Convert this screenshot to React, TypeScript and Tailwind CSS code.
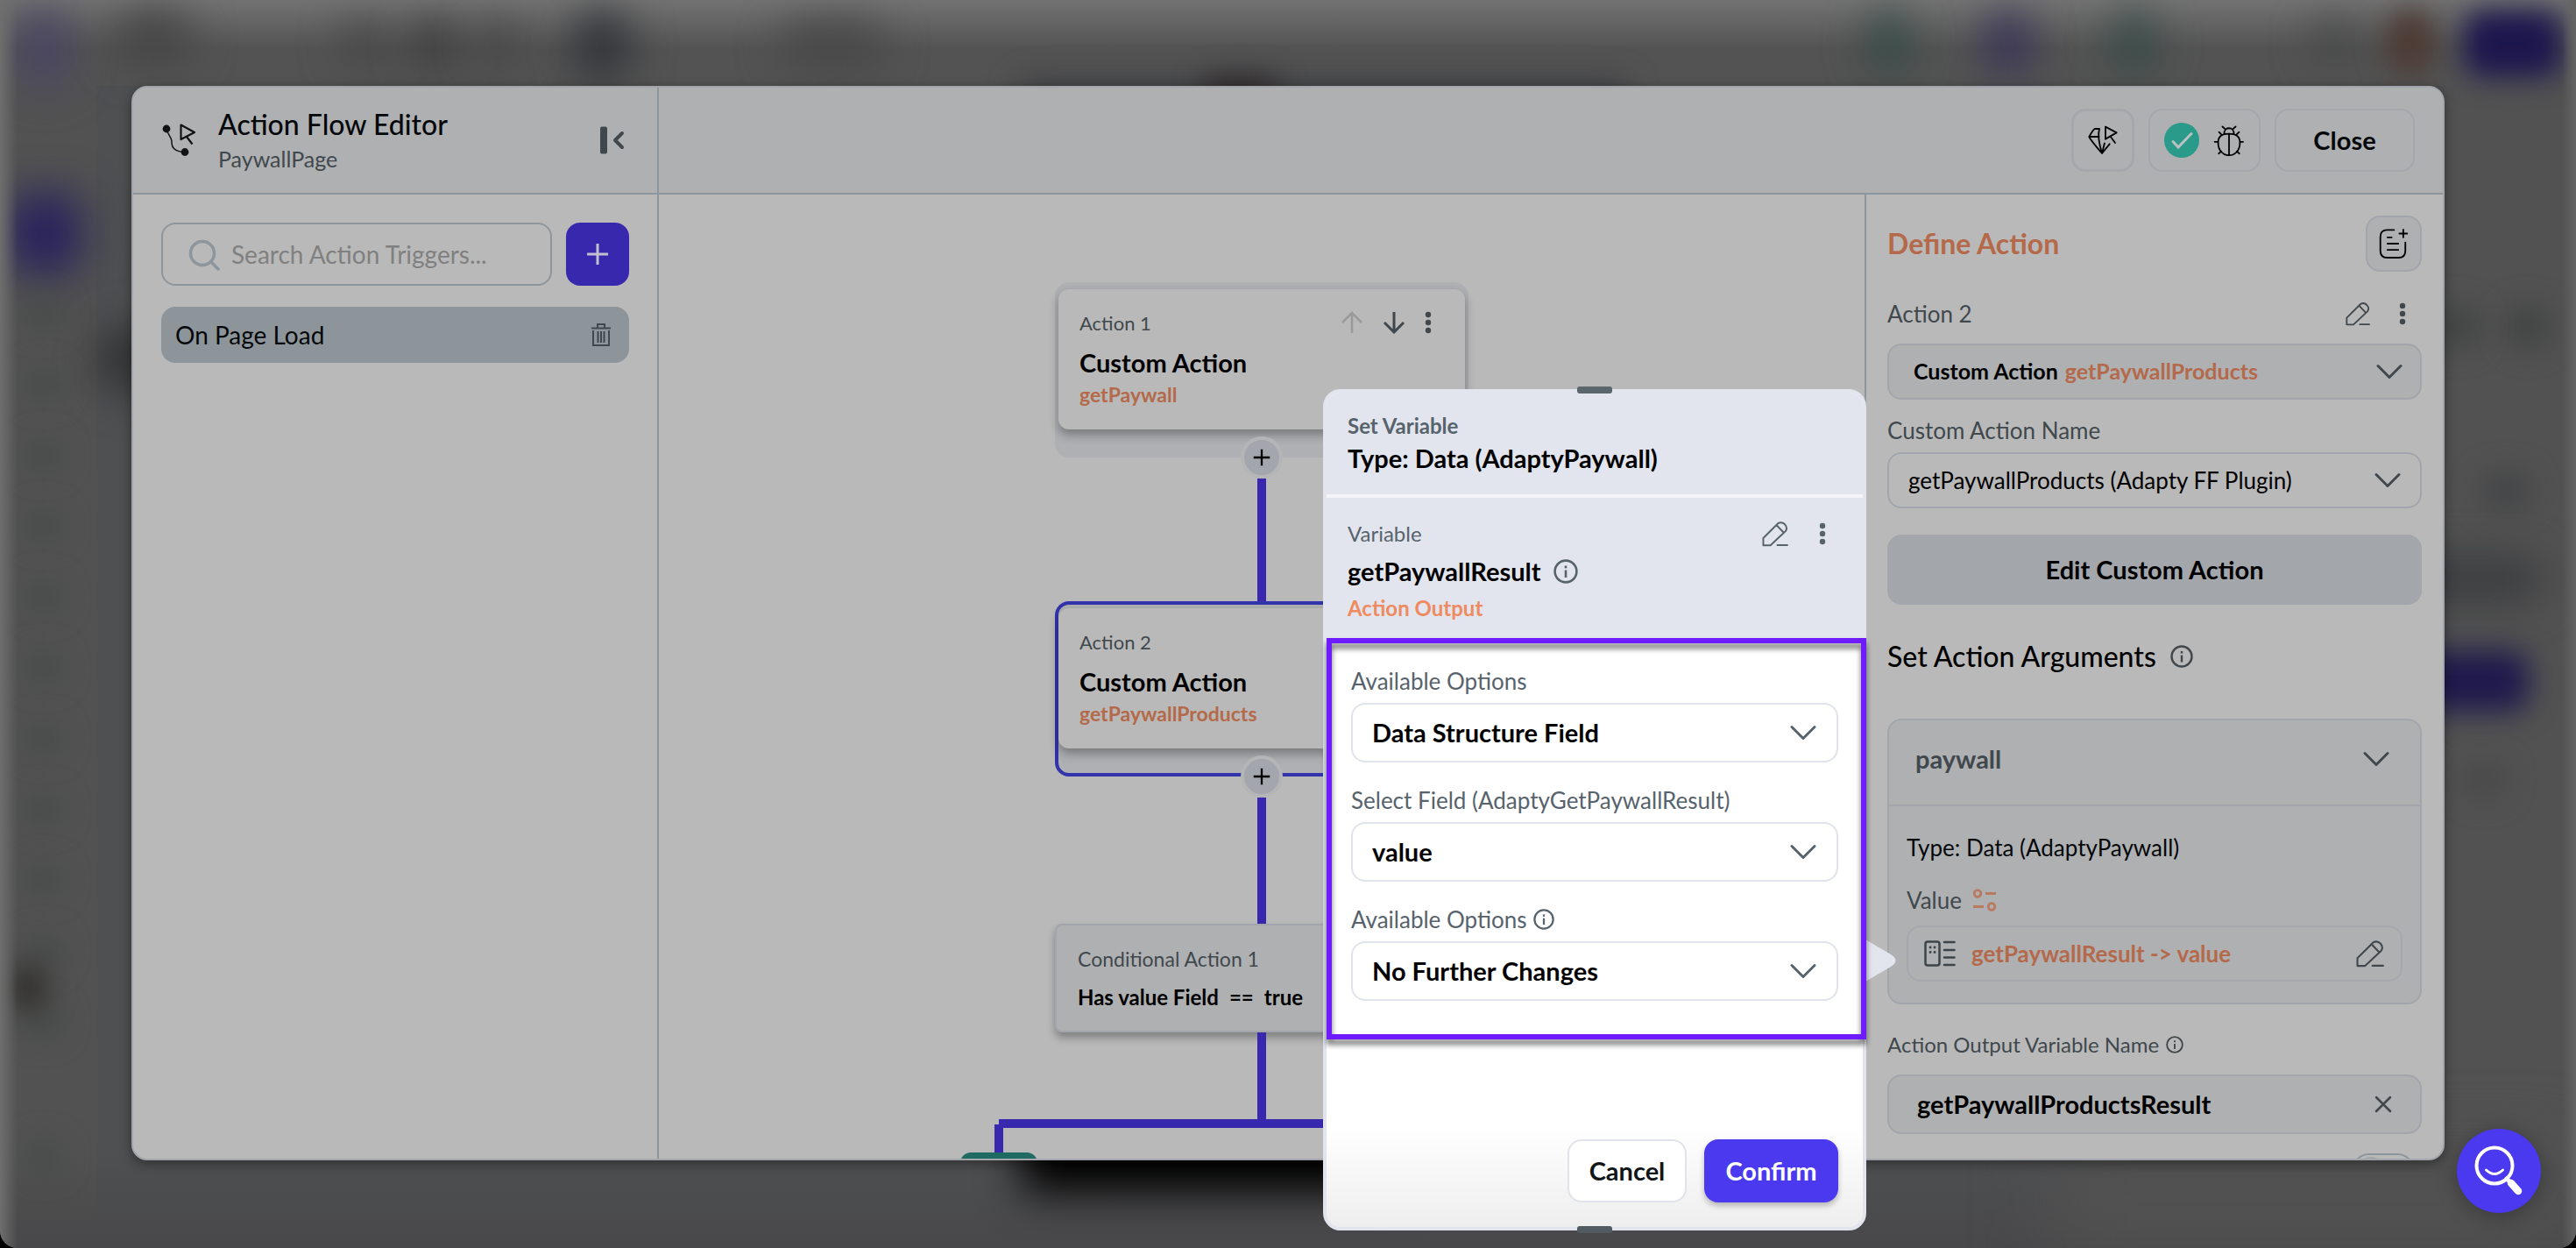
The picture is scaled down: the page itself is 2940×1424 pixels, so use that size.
import type { ReactNode } from "react";

type IconProps = { className?: string };

function Chevron({ className = "" }: IconProps) {
  return (
    <svg viewBox="0 0 30 18" className={`pointer-events-none h-[18px] w-[30px] shrink-0 ${className}`} fill="none" stroke="currentColor" strokeWidth="3" strokeLinecap="round" strokeLinejoin="round" aria-hidden="true">
      <path d="M2 2.5 15 15.5 28 2.5" />
    </svg>
  );
}

function Pencil({ className = "" }: IconProps) {
  return (
    <svg viewBox="1008 698 88 84" className={`shrink-0 ${className}`} fill="none" stroke="currentColor" strokeWidth="5.5" strokeLinecap="round" strokeLinejoin="round" aria-hidden="true">
      <path d="M1014 777v-23l47-47q12-7 22 3 10 11 2 22l-48 45zM1056 712l22 23M1059 776.500h32" />
    </svg>
  );
}

function Dots({ className = "" }: IconProps) {
  return (
    <svg viewBox="0 0 8 26" className={`h-[26px] w-2 shrink-0 ${className}`} fill="currentColor" aria-hidden="true">
      <circle cx="4" cy="4" r="3.200" />
      <circle cx="4" cy="13" r="3.200" />
      <circle cx="4" cy="22" r="3.200" />
    </svg>
  );
}

function Info({ className = "" }: IconProps) {
  return (
    <svg viewBox="0 0 28 28" className={`shrink-0 ${className}`} fill="none" stroke="currentColor" strokeWidth="2.600" aria-hidden="true">
      <circle cx="14" cy="14" r="12.400" />
      <path d="M14 12.500v8.500" />
      <path d="M14 7.500v2.800" />
    </svg>
  );
}

function FlowIcon() {
  return (
    <svg viewBox="183 141 42 42" className="h-[42px] w-[42px] shrink-0" fill="none" stroke="#101314" strokeWidth="2.200" aria-hidden="true">
      <path strokeWidth="1.500" d="M190 149c2 8 5 8 6 14-.5 8 4 12 14 12.500" />
      <circle cx="190" cy="149" r="4.400" fill="#101314" stroke="none" />
      <circle cx="211" cy="175.500" r="4.400" fill="#101314" stroke="none" />
      <path strokeLinejoin="round" d="M206.500 144.500 222 153l-15.500 8zM213 158l6.500 8.500" />
    </svg>
  );
}

function GemCursor() {
  return (
    <svg viewBox="126 100 108 108" className="h-9 w-9" fill="none" stroke="#000" strokeWidth="5.500" strokeLinejoin="round" strokeLinecap="round" aria-hidden="true">
      <path d="M168 115h-16q-6 4-19 27 2 8 44 57l26-32M133 142h34M168 115q-8 28 9 84l9-35M189 108l38 20-38 22zM206 141l16 22" />
    </svg>
  );
}

function Bug() {
  return (
    <svg viewBox="560 98 110 112" className="h-[37px] w-9" fill="none" stroke="#000" strokeWidth="5.500" strokeLinecap="round" aria-hidden="true">
      <path d="M615 130c26 0 38 10 38 30 0 28-16 45-38 45s-38-17-38-45c0-20 12-30 38-30zM598 130c0-26 34-26 34 0M615 130v75" />
      <path d="m592 105 10 9M638 105l-10 9M580 124l9 9M650 124l-9 9M565 158h11M654 158h10M579 199l9-8M651 199l-9-8" />
    </svg>
  );
}

function NoteAdd() {
  return (
    <svg viewBox="1124 455 104 106" className="h-9 w-9" fill="none" stroke="#000" strokeWidth="5.500" strokeLinecap="round" aria-hidden="true">
      <path d="M1177 462h-23q-23 0-23 23v47q0 23 23 23h38q23 0 23-23v-28M1155 487h14M1155 508h36M1155 529h36M1208 461v26M1195 474h26" />
    </svg>
  );
}

function Trash() {
  return (
    <svg viewBox="0 0 24 28" className="h-7 w-6" fill="none" stroke="#40484d" strokeWidth="2" aria-hidden="true">
      <path d="M1 6.500h22M8 6V2h8v4M3 9v17h18V9M8.500 10v13M12 10v13M15.500 10v13" />
    </svg>
  );
}

function FieldIcon() {
  return (
    <svg viewBox="0 0 36 30" className="h-[30px] w-9 shrink-0" fill="none" stroke="#3b4449" strokeWidth="2.500" strokeLinecap="round" aria-hidden="true">
      <rect x="1.500" y="1.500" width="16" height="27" rx="2.500" />
      <path d="M23 2h11.500M23 11h11.500M23 19.500h11.500M23 28h11.500" />
      <path strokeWidth="2.800" d="M7 8h.1M12 8h.1M7 13.500h.1M12 13.500h.1" />
    </svg>
  );
}

function Plus({ className = "" }: IconProps) {
  return (
    <svg viewBox="0 0 26 26" className={className} stroke="currentColor" strokeWidth="3" aria-hidden="true">
      <path d="M13 1v24M1 13h24" />
    </svg>
  );
}

function Backdrop() {
  return (
    <div aria-hidden="true" className="absolute inset-0 overflow-hidden rounded-b-[20px] bg-[#525252]">
      <div className="absolute inset-y-0 left-[110px] right-0 bg-[#4f5052]" />
      <div className="absolute inset-y-0 right-0 w-[150px] bg-[#525252]" />
      <div className="absolute inset-x-0 bottom-0 h-[110px] bg-linear-to-b from-transparent to-[#48484a]" />
      <div className="absolute bottom-0 right-0 h-[110px] w-[600px] bg-[#525252] blur-2xl" />
      <div className="absolute inset-x-0 top-0 h-[98px] bg-[#535353]" />
      <div className="absolute inset-x-0 top-0 h-[56px] bg-linear-to-b from-[#727272] to-transparent" />
      <div className="absolute left-[20px] top-[10px] h-[90px] w-[60px] rounded-full bg-[#4a4463] blur-xl" />
      <div className="absolute left-[130px] top-[14px] h-[60px] w-[90px] rounded-full bg-[#454545] blur-xl" />
      <div className="absolute left-[390px] top-[25px] h-[50px] w-[50px] rounded-full bg-[#454545] blur-xl" />
      <div className="absolute left-[470px] top-[22px] h-[54px] w-[50px] rounded-full bg-[#3a3a3a] blur-xl" />
      <div className="absolute left-[545px] top-[25px] h-[50px] w-[50px] rounded-full bg-[#454545] blur-xl" />
      <div className="absolute left-[655px] top-[12px] h-[80px] w-[64px] rounded-full bg-[#313338] blur-xl" />
      <div className="absolute left-[890px] top-[26px] h-[54px] w-[120px] rounded-full bg-[#484848] blur-xl" />
      <div className="absolute left-[1160px] top-[90px] h-[30px] w-[700px] rounded-full bg-[#3f4044] blur-lg" />
      <div className="absolute left-[1370px] top-[88px] h-[30px] w-[90px] rounded-full bg-[#2f2a2b] blur-lg" />
      <div className="absolute right-[760px] top-[14px] h-[70px] w-[48px] rounded-full bg-[#334b46] blur-xl" />
      <div className="absolute right-[622px] top-[14px] h-[70px] w-[52px] rounded-full bg-[#363058] blur-xl" />
      <div className="absolute right-[480px] top-[14px] h-[70px] w-[48px] rounded-full bg-[#344b46] blur-xl" />
      <div className="absolute right-[250px] top-[22px] h-[50px] w-[50px] rounded-full bg-[#454646] blur-xl" />
      <div className="absolute right-[160px] top-[10px] h-[76px] w-[58px] rounded-full bg-[#4d3b34] blur-lg" />
      <div className="absolute right-[16px] top-[12px] h-[76px] w-[112px] rounded-[20px] bg-[#1c164e] blur-lg" />
      <div className="absolute left-[8px] top-[218px] h-[96px] w-[86px] rounded-[30px] bg-[#29235c] blur-xl" />
      <div className="absolute left-[115px] top-[370px] h-[80px] w-[60px] rounded-full bg-[#2e2f31] blur-xl" />
      <div className="absolute bottom-[240px] left-[30px] top-[340px] flex w-10 flex-col justify-between">
        {Array.from({ length: 11 }, (_, i) => (
          <div key={i} className="h-9 w-10 rounded-full bg-[#474a49] blur-lg" />
        ))}
      </div>
      <div className="absolute left-[12px] top-[1100px] h-[54px] w-[40px] rounded-full bg-[#2f2e2b] blur-lg" />
      <div className="absolute bottom-[86px] left-[30px] h-9 w-10 rounded-full bg-[#474a49] blur-lg" />
      <div className="absolute right-[30px] top-[348px] h-[50px] w-[50px] rounded-full bg-[#424343] blur-lg" />
      <div className="absolute right-[110px] top-[348px] h-[50px] w-[50px] rounded-full bg-[#424343] blur-lg" />
      <div className="absolute right-[50px] top-[540px] h-[40px] w-[60px] rounded-full bg-[#444547] blur-lg" />
      <div className="absolute right-[40px] top-[636px] h-[50px] w-[180px] rounded-[20px] bg-[#3b3c3f] blur-xl" />
      <div className="absolute right-[54px] top-[742px] h-[70px] w-[140px] rounded-[20px] bg-[#1f1a4c] blur-lg" />
      <div className="absolute right-[80px] top-[870px] h-[40px] w-[50px] rounded-full bg-[#484948] blur-lg" />
      <div className="absolute bottom-[64px] left-[1166px] h-[100px] w-[440px] bg-black blur-xl" />
      <div className="absolute inset-y-0 left-0 w-5 bg-linear-to-r from-[#6e6e6e] to-transparent" />
      <div className="absolute inset-y-0 right-0 w-4 bg-linear-to-l from-[#646464] to-transparent" />
    </div>
  );
}

function TriggerPanel() {
  return (
    <aside className="w-[600px] shrink-0 border-r-2 border-[#8d969c] px-8 pt-8">
      <div className="flex gap-4">
        <label className="flex h-[72px] min-w-0 flex-1 items-center gap-3 rounded-2xl border-2 border-[#8d969c] pl-7">
          <svg viewBox="0 0 38 38" className="h-[38px] w-[38px] shrink-0" fill="none" stroke="#8d969c" strokeWidth="3.500" strokeLinecap="round" aria-hidden="true">
            <circle cx="17" cy="18" r="13.500" />
            <path d="m27 28 8 8" />
          </svg>
          <input type="search" aria-label="Search action triggers" placeholder="Search Action Triggers..." className="min-w-0 flex-1 bg-transparent text-[28px] text-black outline-none placeholder:text-[#808080]" />
        </label>
        <button type="button" aria-label="Add trigger" className="flex h-[72px] w-[72px] items-center justify-center rounded-2xl bg-[#3828ad] text-[#c2bfd0]">
          <Plus className="h-[26px] w-[26px]" />
        </button>
      </div>
      <div className="mt-6 flex h-16 items-center justify-between rounded-2xl bg-[#8d959b] pl-4 pr-5">
        <button type="button" className="text-[28px] text-[#05080a]">On Page Load</button>
        <button type="button" aria-label="Delete trigger"><Trash /></button>
      </div>
    </aside>
  );
}

function ActionNode({ step, target, selected }: { step: string; target: string; selected?: boolean }) {
  return (
    <div className={`h-[200px] w-[472px] shrink-0 rounded-2xl border-4 bg-[#aeb0b3] ${selected ? "border-[#3333ac]" : "border-[#aeb0b3]"}`}>
      <div className="mt-1 flex h-[160px] flex-col rounded-xl bg-[#b9b9b9] px-6 pt-5 shadow-[0_6px_12px_rgba(0,0,0,0.32)]">
        <div className="flex h-9 items-center justify-between">
          <span className="text-[22px] text-[#40484d]">{step}</span>
          <span className="flex items-center gap-[22px] pr-[14px]">
            <button type="button" aria-label="Move up" className="text-[#9a9a9a]">
              <svg viewBox="0 0 26 26" className="h-[26px] w-[26px]" fill="none" stroke="currentColor" strokeWidth="2.500" aria-hidden="true"><path d="M13 25V2M2 13 13 2l11 11" /></svg>
            </button>
            <button type="button" aria-label="Move down" className="text-[#40484d]">
              <svg viewBox="0 0 26 26" className="h-[26px] w-[26px]" fill="none" stroke="currentColor" strokeWidth="3" aria-hidden="true"><path d="M13 1v22M2 13l11 11 11-11" /></svg>
            </button>
            <button type="button" aria-label="Node menu" className="text-[#40484d]"><Dots /></button>
          </span>
        </div>
        <span className="mt-2 text-[29px] font-bold leading-10 text-black">Custom Action</span>
        <span className="text-[23px] font-bold leading-8 text-[#b46a4a]">{target}</span>
      </div>
    </div>
  );
}

function AddNode() {
  return (
    <button type="button" aria-label="Add action" className="relative -mt-6 flex h-12 w-12 shrink-0 items-center justify-center rounded-full border-4 border-[#b4b5b7] bg-[#a3a6ac] text-black">
      <Plus className="h-5 w-5" />
    </button>
  );
}

function FlowCanvas() {
  return (
    <section aria-label="Action flow" className="flex min-w-0 flex-1 flex-col items-center overflow-hidden pt-[100px]">
      <ActionNode step="Action 1" target="getPaywall" />
      <AddNode />
      <div className="h-[140px] w-[10px] shrink-0 bg-[#3828ad]" />
      <ActionNode step="Action 2" target="getPaywallProducts" selected />
      <AddNode />
      <div className="h-36 w-[10px] shrink-0 bg-[#3828ad]" />
      <div className="flex h-[124px] w-[472px] shrink-0 flex-col rounded-lg border-2 border-[#a2a5ab] bg-[#afb0b2] px-6 pt-5 shadow-[0_6px_10px_rgba(0,0,0,0.3)]">
        <span className="text-[23px] leading-9 text-[#40484d]">Conditional Action 1</span>
        <span className="flex gap-3 text-[24px] font-bold leading-[52px] text-black">
          <span>Has value Field</span>
          <span>==</span>
          <span>true</span>
        </span>
      </div>
      <div className="h-[99px] w-[10px] shrink-0 bg-[#3828ad]" />
      <div className="w-[610px] shrink-0">
        <div className="mx-[5px] h-[10px] bg-[#3828ad]" />
        <div className="flex justify-between">
          <div className="-mt-1 h-9 w-[10px] bg-[#3828ad]" />
          <div className="-mt-1 h-9 w-[10px] bg-[#3828ad]" />
        </div>
        <div className="-mx-[39px] -mt-1 flex justify-between">
          <div className="h-10 w-[88px] shrink-0 rounded-xl bg-[#1f6b62]" />
          <div className="h-10 w-[88px] shrink-0 rounded-xl bg-[#1f6b62]" />
        </div>
      </div>
    </section>
  );
}

function ActionPanel() {
  return (
    <aside className="w-[660px] shrink-0 overflow-hidden border-l-2 border-[#8d969c] px-6 pt-6 text-[#40484d]">
      <div className="flex h-16 items-center justify-between">
        <h2 className="text-[32px] font-bold text-[#b46a4a]">Define Action</h2>
        <button type="button" aria-label="Add note" className="flex h-16 w-16 items-center justify-center rounded-2xl border-2 border-[#a2a5ab] bg-[#afb0b2]"><NoteAdd /></button>
      </div>
      <div className="mt-8 flex h-8 items-center pr-[18px]">
        <span className="flex-1 text-[26px]">Action 2</span>
        <button type="button" aria-label="Rename action"><Pencil className="h-7 w-[30px]" /></button>
        <button type="button" aria-label="Action menu" className="ml-8"><Dots /></button>
      </div>
      <button type="button" className="mt-[18px] flex h-16 w-full items-center gap-2 rounded-2xl border-2 border-[#a2a5ab] bg-[#afb0b2] pl-7 pr-5 text-[25px] font-bold">
        <span className="text-black">Custom Action</span>
        <span className="text-[#b46a4a]">getPaywallProducts</span>
        <Chevron className="ml-auto" />
      </button>
      <label htmlFor="action-name" className="mt-5 block text-[26px] leading-[30px]">Custom Action Name</label>
      <div className="relative mt-[10px]">
        <select id="action-name" className="h-16 w-full appearance-none rounded-2xl border-2 border-[#a2a5ab] bg-transparent pl-[22px] text-[26px] text-black">
          <option>getPaywallProducts (Adapty FF Plugin)</option>
        </select>
        <Chevron className="absolute right-6 top-[23px]" />
      </div>
      <button type="button" className="mt-[30px] h-20 w-full rounded-2xl bg-[#a3a6ab] text-[29px] font-bold text-black">Edit Custom Action</button>
      <h3 className="mt-[39px] flex h-10 items-center gap-4 text-[32px] font-medium text-black">
        Set Action Arguments <Info className="h-[26px] w-[26px] text-[#40484d]" />
      </h3>
      <section className="mt-[51px] rounded-2xl border-2 border-[#a2a5ab] bg-[#afb0b2]">
        <button type="button" className="flex h-[98px] w-full items-center justify-between border-b-2 border-[#a2a5ab] pb-2 pl-[30px] pr-[35px] text-[29px] font-bold">
          paywall <Chevron />
        </button>
        <div className="px-5 pb-6 pt-8 text-[26px] leading-[30px]">
          <p className="text-[#05080a]">Type: Data (AdaptyPaywall)</p>
          <p className="mt-[30px] flex items-center gap-3 text-[26px]">
            Value
            <svg viewBox="0 0 28 26" className="h-[26px] w-7" fill="none" stroke="#b97a60" strokeWidth="2.800" aria-hidden="true">
              <circle cx="6" cy="5.500" r="3.800" />
              <path d="M15 5.500h12M1 20.500h12" />
              <circle cx="22" cy="20.500" r="3.800" />
            </svg>
          </p>
          <div className="mt-[14px] flex h-16 items-center rounded-2xl border-2 border-[#a5a7ad] pl-[18px] pr-[18px]">
            <FieldIcon />
            <span className="ml-[18px] flex-1 font-bold text-[#b46a4a]">getPaywallResult -&gt; value</span>
            <button type="button" aria-label="Edit value"><Pencil className="h-8 w-[34px]" /></button>
          </div>
        </div>
      </section>
      <label htmlFor="output-name" className="mt-[31px] flex items-center gap-2 text-[24px] leading-[30px]">
        Action Output Variable Name <Info className="h-5 w-5" />
      </label>
      <div className="mt-[19px] flex h-[68px] items-center rounded-2xl border-2 border-[#a2a5ab] bg-[#afb0b2] pl-8 pr-8">
        <input id="output-name" defaultValue="getPaywallProductsResult" className="min-w-0 flex-1 bg-transparent text-[29px] font-bold text-black outline-none" />
        <button type="button" aria-label="Clear name">
          <svg viewBox="0 0 20 20" className="h-5 w-5" stroke="currentColor" strokeWidth="2.500" strokeLinecap="round" aria-hidden="true"><path d="m2 2 16 16M18 2 2 18" /></svg>
        </button>
      </div>
      <button type="button" role="switch" aria-checked="false" aria-label="Output option" className="ml-auto mr-2 mt-[22px] flex h-10 w-[72px] items-center rounded-full border-2 border-[#8d969c] pl-1">
        <span className="h-8 w-8 rounded-full bg-[#a2a5ab]" />
      </button>
    </aside>
  );
}

function OptionField({ id, label, value, hint }: { id: string; label: string; value: string; hint?: ReactNode }) {
  return (
    <div>
      <label htmlFor={id} className="flex items-center gap-2 text-[26px] leading-[30px] text-[#57636c]">
        {label} {hint}
      </label>
      <div className="relative mt-[10px]">
        <select id={id} className="h-[68px] w-full appearance-none rounded-2xl border-2 border-[#e0e3ea] bg-white pl-[22px] text-[29px] font-bold text-black">
          <option>{value}</option>
        </select>
        <Chevron className="absolute right-[25px] top-[25px] text-[#57636c]" />
      </div>
    </div>
  );
}

function VariableDialog() {
  return (
    <div role="dialog" aria-label="Set Variable" className="absolute right-[810px] top-[444px] flex h-[960px] w-[620px] flex-col rounded-[20px] border-4 border-[#e2e5ee] bg-linear-to-b from-white from-88% to-[#eeeeee]">
      <div className="rounded-t-2xl border-b-4 border-[#f3f4f8] bg-[#e2e5ee] px-6 pb-[22px] pt-5">
        <p className="text-[24px] font-bold leading-9 text-[#57636c]">Set Variable</p>
        <h2 className="text-[29px] font-bold leading-[38px] text-black">Type: Data (AdaptyPaywall)</h2>
      </div>
      <div className="bg-[#e2e5ee] pb-[18px] pl-6 pr-[42px] pt-[22px] text-[#57636c]">
        <div className="flex h-[38px] items-center">
          <span className="flex-1 text-[24px]">Variable</span>
          <button type="button" aria-label="Edit variable"><Pencil className="h-[30px] w-8" /></button>
          <button type="button" aria-label="Variable menu" className="ml-[34px]"><Dots /></button>
        </div>
        <p className="mt-[2px] flex h-11 items-center gap-[14px] text-[29px] font-bold text-black">
          getPaywallResult <Info className="h-7 w-7 text-[#57636c]" />
        </p>
        <p className="text-[24px] font-bold leading-10 text-[#ee8b60]">Action Output</p>
      </div>
      <div className="flex flex-col gap-7 px-7 pt-[30px]">
        <OptionField id="option-kind" label="Available Options" value="Data Structure Field" />
        <OptionField id="option-field" label="Select Field (AdaptyGetPaywallResult)" value="value" />
        <OptionField id="option-change" label="Available Options" value="No Further Changes" hint={<Info className="h-6 w-6" />} />
      </div>
      <div className="mt-auto flex justify-end gap-5 px-7 pb-7">
        <button type="button" className="h-[72px] w-[136px] rounded-2xl border-2 border-[#e0e3ea] bg-white text-[29px] font-bold text-[#101518]">Cancel</button>
        <button type="button" className="h-[72px] w-[153px] rounded-2xl bg-[#4b39ef] text-[29px] font-bold text-white shadow-[0_4px_6px_rgba(0,0,0,0.25)]">Confirm</button>
      </div>
      <span className="absolute -top-[7px] left-1/2 h-2 w-10 -translate-x-1/2 rounded-[3px] bg-[#5a656c]" />
      <span className="absolute -bottom-[7px] left-1/2 h-2 w-10 -translate-x-1/2 rounded-[3px] bg-[#525b62]" />
      <svg viewBox="0 0 36 48" className="absolute -right-[39px] top-[624px] h-12 w-9" fill="#e2e5ee" aria-hidden="true">
        <path d="M0 0 29 17q11 7 0 14L0 48z" />
      </svg>
      <div className="pointer-events-none absolute -right-1 left-0 top-[280px] h-[458px] border-[6px] border-[#6f1bff] drop-shadow-[0_6px_3px_rgba(0,0,0,0.55)]" />
    </div>
  );
}

export default function App() {
  return (
    <div className="relative flex h-screen overflow-hidden bg-black px-[150px] pb-[100px] pt-[98px] font-['Lato',sans-serif]">
      <Backdrop />
      <main className="relative flex min-w-0 flex-1 flex-col overflow-hidden rounded-[18px] border-2 border-[#a2a5ab] bg-[#b9b9b9] shadow-[0_4px_14px_rgba(0,0,0,0.4)]">
        <header className="flex h-[122px] shrink-0 border-b-2 border-[#8d969c] bg-[#afb0b2]">
          <div className="flex w-[600px] shrink-0 items-center border-r-2 border-[#8d969c] pl-[31px] pr-9">
            <FlowIcon />
            <div className="ml-6 flex-1">
              <h1 className="text-[32px] font-medium leading-[42px] text-[#05080a]">Action Flow Editor</h1>
              <p className="text-[25px] leading-9 text-[#40484d]">PaywallPage</p>
            </div>
            <button type="button" aria-label="Collapse panel">
              <svg viewBox="0 0 30 34" className="h-[34px] w-[30px]" fill="none" stroke="#40484d" strokeLinecap="round" strokeLinejoin="round" aria-hidden="true">
                <rect x="1" y="1.500" width="8" height="31" rx="2" fill="#40484d" stroke="none" />
                <path strokeWidth="4" d="m26 9-8 8 8 8" />
              </svg>
            </button>
          </div>
          <div className="flex flex-1 items-center justify-end gap-4 pr-8">
            <button type="button" aria-label="AI actions" className="flex h-[72px] w-[72px] items-center justify-center rounded-2xl border-[3px] border-[#a5a7ad]"><GemCursor /></button>
            <button type="button" aria-label="Debug" className="flex h-[72px] w-32 items-center justify-between rounded-2xl border-2 border-[#a5a7ad] px-4">
              <svg viewBox="0 0 40 40" className="h-10 w-10" fill="none" aria-hidden="true">
                <circle cx="20" cy="20" r="20" fill="#2a9a8b" />
                <path d="m10 21.500 6 6.500 15-15.500" stroke="#b9c2c0" strokeWidth="3" strokeLinecap="round" />
              </svg>
              <Bug />
            </button>
            <button type="button" className="h-[72px] w-40 rounded-2xl border-2 border-[#a5a7ad] text-[29px] font-bold text-[#05080a]">Close</button>
          </div>
        </header>
        <div className="flex min-h-0 flex-1">
          <TriggerPanel />
          <FlowCanvas />
          <ActionPanel />
        </div>
      </main>
      <VariableDialog />
      <button type="button" aria-label="Search help" className="absolute bottom-10 right-10 flex h-24 w-24 items-center justify-center rounded-full bg-[#4b39ef] shadow-[0_4px_24px_rgba(0,0,0,0.3)]">
        <svg viewBox="0 0 60 60" className="h-[60px] w-[60px]" fill="none" stroke="#fff" strokeLinecap="round" aria-hidden="true">
          <circle cx="25" cy="24" r="20.500" strokeWidth="4" />
          <path strokeWidth="3" d="M15.500 29q9.500 9 19 0" />
          <path strokeWidth="5" d="m39 39 4 4" />
          <path strokeWidth="8.500" d="m44 44 8 9" />
        </svg>
      </button>
    </div>
  );
}
